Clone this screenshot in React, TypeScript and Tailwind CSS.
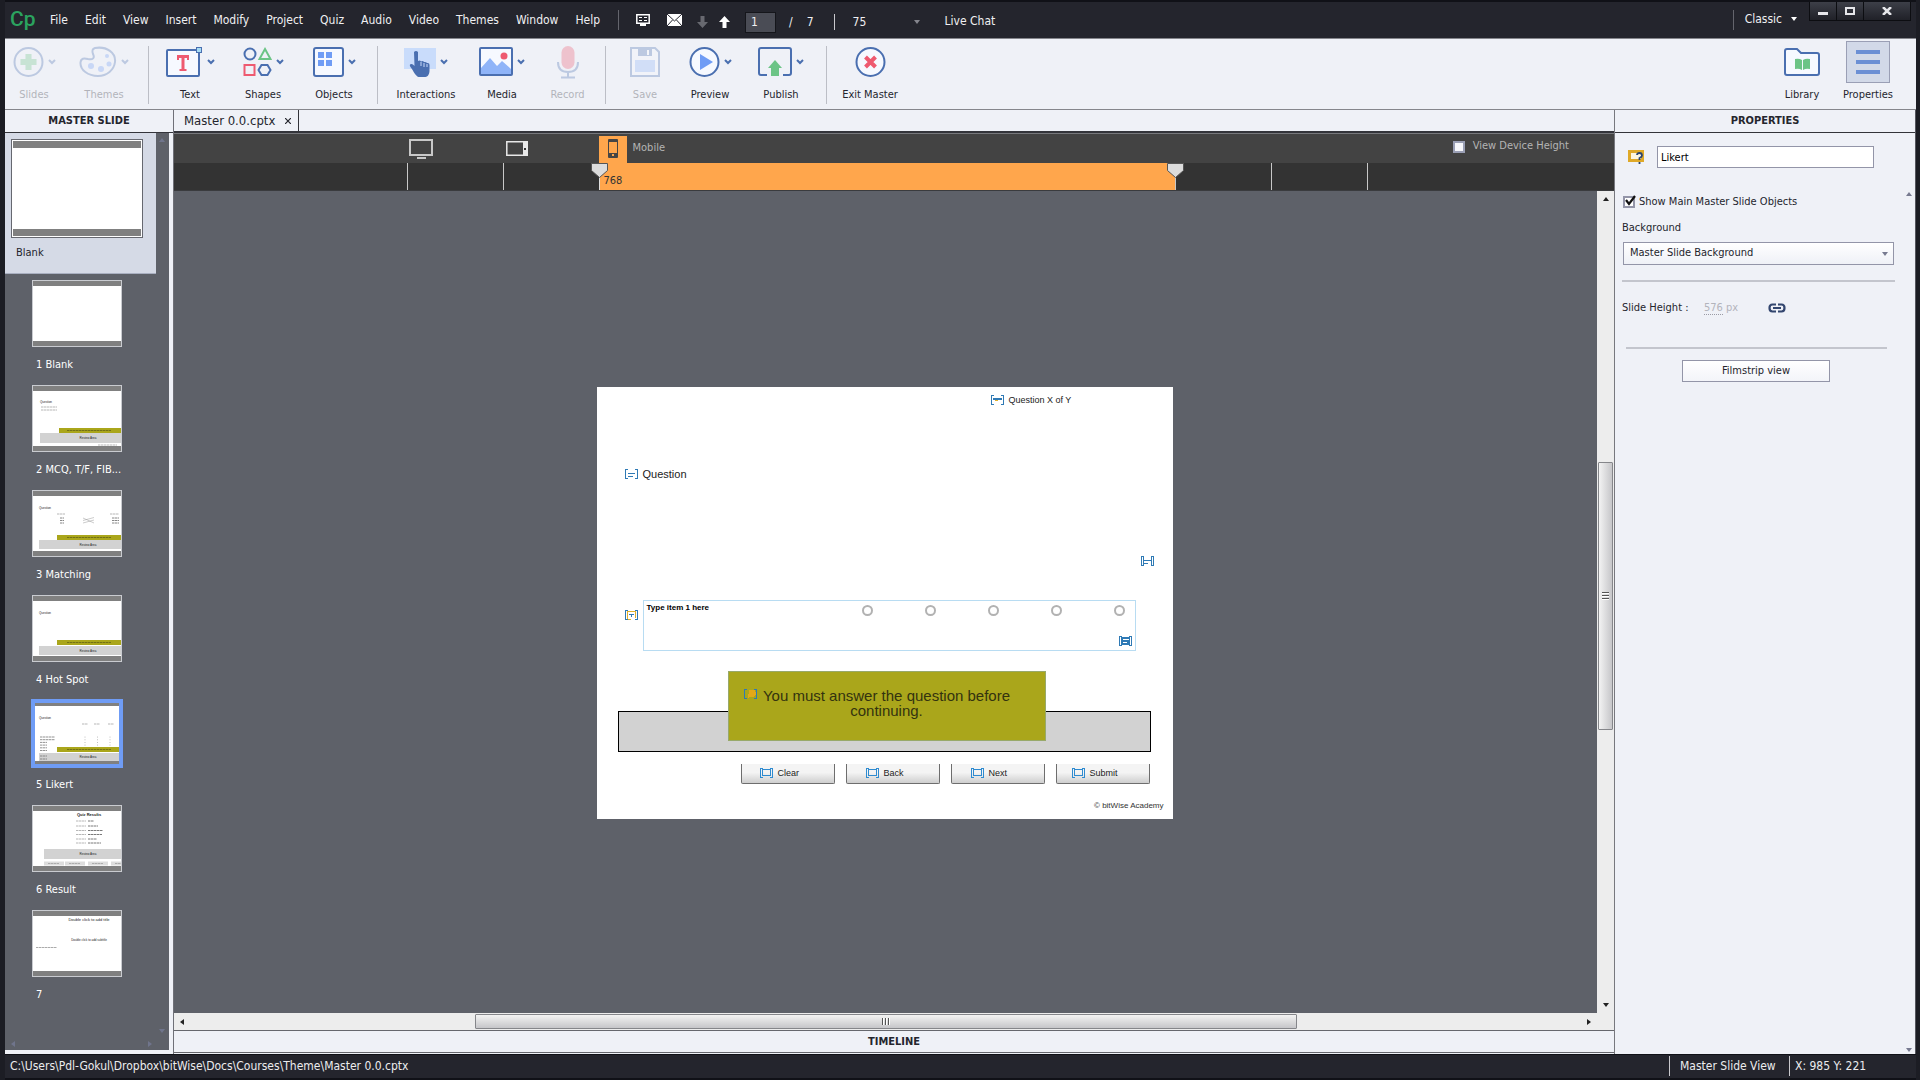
import type { ReactNode } from "react";

const MENUS = ["File", "Edit", "View", "Insert", "Modify", "Project", "Quiz", "Audio", "Video", "Themes", "Window", "Help"];

const INK = "#4a6fb0";

// ---------- small shared drawings ----------

function Chevron() {
  return (
    <svg width="8" height="6" viewBox="0 0 8 6" className="shrink-0">
      <path d="M1 1l3 3 3-3" fill="none" stroke={INK} strokeWidth="2" />
    </svg>
  );
}

function Caret({ dir, className }: { dir: "up" | "down" | "left" | "right"; className?: string }) {
  const d = { up: "M1 6l3-4 3 4z", down: "M1 2l3 4 3-4z", left: "M6 1L2 4l4 3z", right: "M2 1l4 3-4 3z" }[dir];
  return (
    <svg width="8" height="8" viewBox="0 0 8 8" className={`shrink-0 ${className ?? ""}`}>
      <path d={d} fill="currentColor" />
    </svg>
  );
}

function Marker({ kind }: { kind: "progress" | "text" | "list" | "item" | "caption" | "filled" | "button" }) {
  return (
    <svg width="13" height="10" viewBox="0 0 13 10" className="shrink-0" shapeRendering="crispEdges">
      <path d="M3 .5H.5v9H3M10 .5h2.5v9H10" fill="none" stroke={kind === "button" ? "#2f8bd0" : "#2f7ab5"} />
      {kind === "progress" && <><path d="M2 4h9" stroke="#2f7ab5" strokeWidth="2" /><path d="M4 5.5h3" stroke="#e0b02c" /></>}
      {kind === "text" && <path d="M3 4.5h7M3 7.5h5" stroke="#2f7ab5" />}
      {kind === "list" && <path d="M2.5 1v8M10.5 1v8M3 4.5h7M3 7.5h4" stroke="#2f7ab5" />}
      {kind === "item" && <><path d="M2.5 9V1.5h8V8M3 9.5h3" fill="none" stroke="#e0b02c" /><path d="M4 4.5h5M6.5 4v3" stroke="#2f7ab5" /></>}
      {kind === "caption" && <path d="M5 1h6l1 4-2 3H6L4 9z" fill="#e3a818" />}
      {kind === "filled" && <><path d="M2 1h9v8H2z" fill="#2f7ab5" /><path d="M4 3.5h6M4 6.5h4" stroke="#fff" /></>}
      {kind === "button" && <path d="M2.5 1.5h8v6h-8z" fill="none" stroke="#2f8bd0" />}
    </svg>
  );
}

// ---------- toolbar icons ----------

const icons: Record<string, ReactNode> = {
  Slides: (
    <svg width="31" height="32" viewBox="0 0 31 32">
      <circle cx="15.5" cy="16" r="14" fill="none" stroke={INK} strokeWidth="2" />
      <path d="M12.5 8h6v5h5v6h-5v5h-6v-5h-5v-6h5z" fill="#6cc486" />
    </svg>
  ),
  Themes: (
    <svg width="38" height="32" viewBox="0 0 38 32">
      <path d="M16 2c12-2 21 5 20 14-1 8-8 14-17 14C9 30 1 24 1.500 16.500 2 12 5 12 9 13c5 1 7-1 5-5-1-3-1-5 2-6z" fill="none" stroke={INK} strokeWidth="2" />
      <g fill="#6f9cf5"><circle cx="12" cy="20" r="3" /><circle cx="22" cy="23" r="3" /><circle cx="30" cy="18" r="2.5" /><circle cx="28" cy="10" r="2" /></g>
    </svg>
  ),
  Text: (
    <svg width="37" height="32" viewBox="0 0 37 32">
      <rect x="1" y="4" width="32" height="26" rx="1" fill="#f6f9ff" stroke={INK} strokeWidth="2" />
      <path d="M11 9h12v5h-2v-2h-2.500v11h2v2h-7v-2h2V12H13v2h-2z" fill="#ee5a70" />
      <rect x="30.5" y="1.5" width="5" height="5" fill="#a6dcf5" stroke={INK} />
    </svg>
  ),
  Shapes: (
    <svg width="29" height="32" viewBox="0 0 29 32" fill="none" strokeWidth="2">
      <circle cx="7" cy="8" r="5.5" stroke={INK} />
      <path d="M22 3l5.500 10h-11z" stroke="#6cc486" />
      <rect x="1.5" y="19" width="10" height="10" stroke="#ee5a70" />
      <path d="M18.500 19h6l3 5-3 5h-6l-3-5z" stroke={INK} />
    </svg>
  ),
  Objects: (
    <svg width="31" height="32" viewBox="0 0 31 32">
      <rect x="1" y="2" width="29" height="28" rx="2" fill="#f6f9ff" stroke={INK} strokeWidth="2" />
      <path d="M5 6h6v6H5zM13 6h6v6h-6zM5 14h6v6H5zM13 14h6v6h-6z" fill="#6f9cf5" />
    </svg>
  ),
  Interactions: (
    <svg width="32" height="32" viewBox="0 0 32 32">
      <rect x="0" y="2" width="32" height="21" fill="#c9dcfb" />
      <path d="M10 6q2-2 4 0v9q2-1 3 .5 2-1 3 .5 2-.5 3 1 2.500-.5 2.500 2v6c0 3-2 6-4 6h-7c-3-1-5-6-8-10-2-3 1-4 3-2l1 1z" fill={INK} />
      <path d="M17 16v4M20 17v4M23 18v3" stroke="#c9dcfb" />
    </svg>
  ),
  Media: (
    <svg width="34" height="32" viewBox="0 0 34 32">
      <rect x="1" y="2" width="32" height="27" rx="1" fill="#f6f9ff" stroke={INK} strokeWidth="2" />
      <path d="M2 28v-6l9-10 7 8 5-5 9 8v5z" fill="#8fb4f8" />
      <circle cx="25" cy="10" r="3.5" fill="#ee5a70" />
    </svg>
  ),
  Record: (
    <svg width="22" height="34" viewBox="0 0 22 34">
      <rect x="4.5" y="1" width="13" height="23" rx="6.5" fill="#ee5a70" />
      <path d="M1 17c0 7 4 10 10 10s10-3 10-10M11 27v5M4 32.500h14" fill="none" stroke={INK} strokeWidth="2" />
    </svg>
  ),
  Save: (
    <svg width="30" height="32" viewBox="0 0 30 32">
      <path d="M1 2h24l4 4v24H1z" fill="#f6f9ff" stroke={INK} strokeWidth="2" />
      <path d="M8 2h14v8H8z" fill={INK} /><path d="M18 4v5" stroke="#fff" strokeWidth="2" />
      <path d="M5 14h20v12H5z" fill="#8fb4f8" />
    </svg>
  ),
  Preview: (
    <svg width="31" height="32" viewBox="0 0 31 32">
      <circle cx="15.5" cy="16" r="14" fill="#f6f9ff" stroke={INK} strokeWidth="2" />
      <path d="M11 8l13 8-13 8z" fill="#6f9cf5" />
    </svg>
  ),
  Publish: (
    <svg width="34" height="32" viewBox="0 0 34 32">
      <path d="M9 29H3q-2 0-2-2V4q0-2 2-2h28q2 0 2 2v23q0 2-2 2h-6" fill="none" stroke={INK} strokeWidth="2" />
      <path d="M17 14l7 8h-3v8h-8v-8h-3z" fill="#6cc486" />
    </svg>
  ),
  "Exit Master": (
    <svg width="31" height="32" viewBox="0 0 31 32">
      <circle cx="15.5" cy="16" r="14" fill="#f6f9ff" stroke={INK} strokeWidth="2" />
      <path d="M10.500 11l10 10M20.500 11l-10 10" stroke="#ee5a70" strokeWidth="4" />
    </svg>
  ),
  Library: (
    <svg width="36" height="32" viewBox="0 0 36 32">
      <path d="M1 5q0-2 2-2h10l4 4h16q2 0 2 2v18q0 2-2 2H3q-2 0-2-2z" fill="#f6f9ff" stroke={INK} strokeWidth="2" />
      <path d="M11 13q4-1 7 1v10q-3-2-7-1zM19 14q3-2 7-1v10q-4-1-7 1z" fill="#6cc486" />
    </svg>
  ),
  Properties: (
    <svg width="24" height="26" viewBox="0 0 24 26">
      <path d="M0 3h24M0 13h24M0 23h24" stroke="#6b8fd4" strokeWidth="4" />
    </svg>
  ),
};

const TOOL_GROUPS = [
  { className: "pr-[3px]", tools: [{ name: "Slides", w: "w-[58px]", menu: true, off: true }, { name: "Themes", w: "w-[82px]", menu: true, off: true }] },
  { className: "pr-1", tools: [{ name: "Text", w: "w-[82px]", menu: true }, { name: "Shapes", w: "w-[64px]", menu: true }, { name: "Objects", w: "w-[78px]", menu: true }] },
  { className: "", tools: [{ name: "Interactions", w: "w-[96px]", menu: true }, { name: "Media", w: "w-[56px]", menu: true }, { name: "Record", w: "w-[75px]", off: true }] },
  { className: "", tools: [{ name: "Save", w: "w-[78px]", off: true }, { name: "Preview", w: "w-[52px]", menu: true }, { name: "Publish", w: "w-[90px]", menu: true }] },
];

function Tool({ name, w, menu, off, active }: { name: string; w: string; menu?: boolean; off?: boolean; active?: boolean }) {
  return (
    <button disabled={off} className={`flex flex-col items-center ${w} ${off ? "opacity-30" : ""}`}>
      <span className={`flex h-[42px] items-center justify-center gap-1 ${active ? "w-11 border border-[#9a9fb5] bg-[#d2d9e8]" : ""}`}>
        {icons[name]}
        {menu && <Chevron />}
      </span>
      <span className="mt-1 whitespace-nowrap text-[11px] leading-4">{name}</span>
    </button>
  );
}

function TitleBar() {
  return (
    <header className="flex h-[38px] shrink-0 border-t-2 border-[#101117] bg-[#24252d] text-[12px] text-[#f0f0f2]">
      <div className="w-[45px] pl-[5px] pt-[3px] font-[Roboto,sans-serif] text-[21px] font-medium leading-7 text-[#2ba35f]">Cp</div>
      <nav className="flex h-9 items-center gap-[17px]">
        {MENUS.map(m => <button key={m}>{m}</button>)}
      </nav>
      <div className="ml-[18px] mt-2 h-5 w-px bg-[#64656d]" />
      <div className="flex h-9 items-center pl-[17px] pt-1">
        <button aria-label="Screens" className="mb-1">
          <svg width="14" height="14" viewBox="0 0 14 14"><path d="M.8 1.800h12.400v8.400H.8z" fill="none" stroke="#fff" strokeWidth="1.5" /><path d="M3 4.500h3M8 4.500h3M3 7.500h3M8 7.500h3" stroke="#fff" /><path d="M4 11h6v2H4z" fill="#fff" /></svg>
        </button>
        <button aria-label="Mail" className="mb-1 ml-[17px]">
          <svg width="15" height="12" viewBox="0 0 15 12"><path d="M0 0h15v12H0z" fill="#fff" /><path d="M0 0l7.500 7L15 0M0 12l5.500-6M15 12L9.500 6" fill="none" stroke="#24252d" /></svg>
        </button>
        <button aria-label="Next slide" className="ml-[15px]">
          <svg width="11" height="12" viewBox="0 0 11 12"><path d="M3.500 0h4v6H11l-5.500 6L0 6h3.500z" fill="#686970" /></svg>
        </button>
        <button aria-label="Previous slide" className="ml-[11px]">
          <svg width="11" height="12" viewBox="0 0 11 12"><path d="M3.500 12h4V6H11L5.500 0 0 6h3.500z" fill="#fff" /></svg>
        </button>
        <input aria-label="Slide number" defaultValue="1" className="ml-[15px] h-[21px] w-[31px] border border-[#15161b] bg-[#4a4c55] px-[5px]" />
        <span className="ml-[13px]">/</span>
        <span className="ml-[14px]">7</span>
        <div className="ml-5 h-4 w-px bg-[#c8c8cc]" />
        <button className="ml-[18px] flex w-[68px] items-center justify-between">75 <Caret dir="down" className="text-[#85868e]" /></button>
      </div>
      <button className="ml-6 h-9 pt-[2px]">Live Chat</button>
      <div className="ml-auto mt-2 h-5 w-px bg-[#64656d]" />
      <button className="ml-[11px] flex h-[34px] items-center gap-[9px]">Classic <svg width="6" height="4"><path d="M0 0h6L3 4z" fill="#fff" /></svg></button>
      <div className="ml-3 mr-[5px] flex h-[19px] border border-t-0 border-[#0c0d11] bg-gradient-to-b from-[#3d3f48] to-[#202128]">
        <button aria-label="Minimize" className="flex w-[27px] items-center justify-center border-r border-[#0c0d11]"><span className="mt-1 h-[3px] w-[10px] bg-[#e6e6ea]" /></button>
        <button aria-label="Maximize" className="flex w-[27px] items-center justify-center border-r border-[#0c0d11]"><span className="h-2 w-[10px] border-2 border-[#e6e6ea]" /></button>
        <button aria-label="Close" className="flex w-[46px] items-center justify-center"><svg width="10" height="8" viewBox="0 0 10 8"><path d="M1 0l8 8M9 0L1 8" stroke="#e6e6ea" strokeWidth="2.5" /></svg></button>
      </div>
    </header>
  );
}

// ---------- filmstrip ----------

// a run of greeked text, too small to read in the thumbnail
function Greek({ x, y, w, color = "#999" }: { x: number; y: number; w: number; color?: string }) {
  return <path d={`M${x} ${y}h${w}`} stroke={color} strokeWidth="1" strokeDasharray="2.5 .5" opacity=".7" />;
}

function Tiny({ x, y, size = 4, mid, bold, children }: { x: number; y: number; size?: number; mid?: boolean; bold?: boolean; children: string }) {
  return <text x={x} y={y} fontSize={size} fontWeight={bold ? 700 : 400} textAnchor={mid ? "middle" : "start"} fill="#222" className="font-['Liberation_Sans',sans-serif]">{children}</text>;
}

function Feedback({ x, y, gx, gy, gh }: { x: number; y: number; gx: number; gy: number; gh: number }) {
  return (
    <>
      <rect x={gx} y={gy} width={88 - gx} height={gh} fill="#d2d2d2" />
      <Tiny x={55} y={gy + gh / 2 + 1} size={3} mid>Review Area</Tiny>
      <rect x={x} y={y} width={88 - x} height="5" fill="#aaa61b" />
      <Greek x={34} y={y + 2.5} w={44} color="#5d5b14" />
    </>
  );
}

const SLIDES: { label: string; art?: ReactNode }[] = [
  { label: "1 Blank" },
  {
    label: "2 MCQ, T/F, FIB...",
    art: (
      <>
        <Tiny x={7} y={17} size={3}>Question</Tiny>
        <Greek x={8} y={21} w={16} /><Greek x={8} y={24} w={16} />
        <Feedback x={26} y={42} gx={7} gy={47} gh={10} />
        <Greek x={65} y={59} w={19} />
      </>
    ),
  },
  {
    label: "3 Matching",
    art: (
      <>
        <Tiny x={6} y={18} size={3}>Question</Tiny>
        <Greek x={24} y={23} w={8} /><Greek x={77} y={23} w={9} />
        {[27, 29.5, 32].map(y => <g key={y}><Greek x={27} y={y} w={4} color="#555" /><Greek x={79} y={y} w={7} color="#555" /></g>)}
        <path d="M50 27l11 5M50 29.500l11-3M50 32l11-3" stroke="#999" strokeWidth=".5" />
        <Feedback x={24} y={44} gx={6} gy={49} gh={9} />
      </>
    ),
  },
  {
    label: "4 Hot Spot",
    art: (
      <>
        <Tiny x={6} y={18} size={3}>Question</Tiny>
        <Feedback x={24} y={44} gx={6} gy={50} gh={9} />
      </>
    ),
  },
  {
    label: "5 Likert",
    art: (
      <>
        <Tiny x={6} y={18} size={3}>Question</Tiny>
        {[49, 61, 75].map(x => <Greek key={x} x={x} y={23} w={6} />)}
        {[36, 38.7, 41.4, 44.1, 46.8, 49.5].map((y, i) => (
          <g key={y}>
            <Greek x={7} y={y} w={i < 2 ? 15 : 7} color="#666" />
            {[52, 64.5, 77].map(x => <circle key={x} cx={x} cy={y} r=".5" fill="#aaa" />)}
          </g>
        ))}
        <Feedback x={24} y={46} gx={6} gy={52} gh={8} />
        <Greek x={7} y={55} w={7} color="#666" /><Greek x={7} y={58} w={7} color="#666" />
      </>
    ),
  },
  {
    label: "6 Result",
    art: (
      <>
        <Tiny x={56} y={10} size={4} mid bold>Quiz Results</Tiny>
        {[15, 20, 24.5, 28.5, 33, 37].map((y, i) => <g key={y}><Greek x={43} y={y} w={10} /><Greek x={55} y={y} w={[6, 10, 15, 14, 9, 13][i]} color="#444" /></g>)}
        <rect x="11" y="43" width="77" height="10" fill="#d2d2d2" />
        <Tiny x={55} y={49} size={3} mid>Review Area</Tiny>
        {[11, 32, 55, 78].map(x => <g key={x}><rect x={x} y="55.5" width="20" height="4" fill="#ddd" /><Greek x={x + 4} y={57.5} w={11} /></g>)}
      </>
    ),
  },
  {
    label: "7",
    art: (
      <>
        <Tiny x={56} y={10} size={4} mid>Double click to add title</Tiny>
        <Tiny x={56} y={30} size={3} mid>Double click to add subtitle</Tiny>
        <Greek x={3} y={36.5} w={21} color="#888" />
      </>
    ),
  },
];

function Filmstrip() {
  return (
    <aside className="flex w-[169px] shrink-0 flex-col border-r border-[#6f7078] bg-[#eff1f7]">
      <h2 className="flex h-[23px] shrink-0 items-center justify-center border-b border-[#33343a] text-[11px] font-bold">MASTER SLIDE</h2>
      <div className="mb-1 mr-1 flex min-h-0 flex-1 bg-[#5e6169] text-[11px] text-white">
        <div className="flex min-w-0 flex-1 flex-col">
          <button className="flex h-[141px] w-[151px] shrink-0 flex-col items-start border-b border-[#a9afc0] bg-[#d5dae6] pl-[6px] pt-[6px] text-[#24252d]">
            <span className="h-[99px] w-[132px] border border-[#666870] bg-white p-px">
              <span className="block h-full border-y-[7px] border-[#808080]" />
            </span>
            <span className="ml-[5px] mt-[7px] leading-4">Blank</span>
          </button>
          <div className="flex flex-col pl-[27px] pt-[5px]">
            {SLIDES.map(({ label, art }) => (
              <button key={label} className="flex h-[105px] flex-col items-start pt-px">
                <span className={label === "5 Likert" ? "-m-px h-[69px] w-[92px] overflow-hidden border-4 border-[#6f9cf5]" : "h-[67px] w-[90px] border border-[#c9cbd0]"}>
                  <svg width="88" height="65" viewBox="0 0 88 65" className={label === "5 Likert" ? "-ml-[2px] -mt-[2px] max-w-none" : ""}>
                    <path d="M0 0h88v65H0z" fill="#808080" />
                    <path d="M0 5h88v55H0z" fill="#fff" />
                    {art}
                  </svg>
                </span>
                <span className="ml-1 mt-[10px] leading-4">{label}</span>
              </button>
            ))}
          </div>
          <div className="mb-[2px] mt-auto flex justify-between pl-1 pr-1 text-[#70758c]"><Caret dir="left" /><Caret dir="right" /></div>
        </div>
        <div className="flex flex-col justify-between pb-[15px] pr-[3px] pt-[3px] text-[#70758c]"><Caret dir="up" /><Caret dir="down" /></div>
      </div>
    </aside>
  );
}

// ---------- stage ----------

function Handle() {
  return (
    <svg width="17" height="15" viewBox="0 0 17 15" className="absolute -left-[9px] top-0">
      <path d="M.5.5h16v7l-8 7-8-7z" fill="#dcdcdc" stroke="#555" />
    </svg>
  );
}

function Ruler() {
  return (
    <div className="shrink-0 border-t border-[#77787c] bg-[#434343] text-[11px] text-[#b4b4b4]">
      <div className="grid h-[29px] grid-cols-[1fr_96px_96px_576px_96px_96px_1fr] pr-[15px]">
        <span />
        <button aria-label="Desktop" className="pl-[2px]">
          <svg width="24" height="20" viewBox="0 0 24 20"><path d="M1 1h22v15H1z" fill="none" stroke="#c8c8c8" strokeWidth="2" /><path d="M8 19h9" stroke="#c8c8c8" strokeWidth="2" /></svg>
        </button>
        <button aria-label="Tablet" className="pl-[3px]">
          <svg width="22" height="15" viewBox="0 0 22 15"><path d="M.8.8h20.400v13.400H.8z" fill="none" stroke="#e8e8e8" strokeWidth="1.5" /><path d="M17 0h5v15h-5z" fill="#e8e8e8" /><path d="M18 7h2v2h-2z" fill="#333" /></svg>
        </button>
        <button className="flex items-end gap-[6px]">
          <span className="flex h-[27px] w-7 items-start justify-center bg-[#ffa64c] pt-[3px]">
            <svg width="10" height="19" viewBox="0 0 10 19"><rect width="10" height="19" rx="1" fill="#454545" /><path d="M1 3h8v11H1z" fill="#ffa64c" /><path d="M4 15h2v2H4z" fill="#ffa64c" /></svg>
          </span>
          <span className="self-center">Mobile</span>
        </button>
        <label className="col-span-3 flex items-center justify-end gap-2 pb-1 pr-[30px]">
          <input type="checkbox" className="h-3 w-3 appearance-none border-2 border-[#9a9fb5] bg-[#f6f7fb]" />
          View Device Height
        </label>
      </div>
      <div className="grid h-7 grid-cols-[1fr_96px_96px_576px_96px_96px_1fr] border-b border-[#3a3b3e] bg-[#333] pr-[15px]">
        <span />
        <span className="border-l border-[#c8c8c8]" />
        <span className="border-l border-[#c8c8c8]" />
        <span className="relative border-l border-[#e0e0e0] bg-[#ffa64c] pl-1 pt-[10px] leading-4 text-[#333]"><Handle />768</span>
        <span className="relative border-l border-[#c8c8c8]"><Handle /></span>
        <span className="border-l border-[#c8c8c8]" />
        <span className="border-l border-[#c8c8c8]" />
      </div>
    </div>
  );
}

const BUTTONS = [
  { label: "Clear", pad: "pl-[18px]" },
  { label: "Back", pad: "pl-[19px]" },
  { label: "Next", pad: "pl-[19px]" },
  { label: "Submit", pad: "pl-[15px]" },
];

// Slide objects sit on a free canvas, so each has its own place.
function Slide() {
  return (
    <div className="relative h-[432px] w-[576px] shrink-0 overflow-hidden bg-white font-['Liberation_Sans',sans-serif] text-[#222]">
      <div className="absolute left-[394px] top-[7px] flex items-center gap-[5px] text-[9px] leading-3"><Marker kind="progress" />Question X of Y</div>
      <div className="absolute left-7 top-20 flex items-center gap-[5px] text-[11px] leading-[14px]"><Marker kind="text" />Question</div>
      <div className="absolute left-[544px] top-[169px]"><Marker kind="list" /></div>

      <div className="absolute left-7 top-[223px]"><Marker kind="item" /></div>
      <div role="radiogroup" aria-labelledby="item-1" className="absolute left-[46px] top-[213px] h-[51px] w-[493px] border border-[#b8dcf2]">
        <span id="item-1" className="absolute left-[3px] top-px text-[8px] font-bold leading-3 text-black">Type item 1 here</span>
        <div className="absolute left-[218px] top-1 flex gap-[52px]">
          {[1, 2, 3, 4, 5].map(n => <input key={n} type="radio" name="likert" aria-label={`Rating ${n}`} className="h-[11px] w-[11px] appearance-none rounded-full border-2 border-[#b2b2b2] bg-white" />)}
        </div>
        <div className="absolute bottom-1 right-[3px]"><Marker kind="filled" /></div>
      </div>

      <div className="absolute left-[21px] top-[324px] h-[41px] w-[533px] border border-black bg-[#d2d2d2]" />
      <div className="absolute left-[131px] top-[284px] h-[70px] w-[318px] border border-[#98a96a] bg-[#aaa61b] pt-4 text-center text-[15px] leading-[15px] text-[#33330f]">
        <span className="absolute left-[15px] top-[17px]"><Marker kind="caption" /></span>
        You must answer the question before<br />continuing.
      </div>

      <div className="absolute left-36 top-[377px] flex gap-[11px]">
        {BUTTONS.map(({ label, pad }) => (
          <button key={label} className={`flex h-5 w-[94px] items-center gap-[5px] rounded-b-[2px] border border-t-0 border-[#6e6e6e] bg-gradient-to-b from-[#f4f4f4] from-45% to-[#cfcfcf] pb-[2px] text-[9px] leading-3 ${pad}`}>
            <Marker kind="button" />{label}
          </button>
        ))}
      </div>
      <div className="absolute bottom-[7px] right-[9px] text-[8px] leading-3 text-[#333]">© bitWise Academy</div>
    </div>
  );
}

function Stage() {
  return (
    <main className="flex min-w-0 flex-1 flex-col bg-[#eff1f7]">
      <div className="flex h-[22px] shrink-0 border-b border-[#33343a]">
        <div className="flex w-[125px] items-center justify-between border-r border-[#33343a] pl-[10px] pr-1 text-[13px]">
          Master 0.0.cptx
          <button aria-label="Close tab" className="p-[3px]"><svg width="6" height="6" viewBox="0 0 6 6"><path d="M0 0l6 6M6 0L0 6" stroke="#24252d" strokeWidth="1.2" /></svg></button>
        </div>
      </div>
      <div className="h-px shrink-0 bg-[#33343a]" />
      <Ruler />
      <div className="flex min-h-0 flex-1">
        <div className="flex min-w-0 flex-1 items-center justify-center overflow-hidden bg-[#5e6169] pr-[2px] pt-[2px]"><Slide /></div>
        <div className="flex w-[17px] flex-col items-center bg-[#ededed] py-1 text-[#222]">
          <Caret dir="up" />
          <div className="flex flex-1 flex-col">
            <div className="grow-[260]" />
            <div className="flex w-[15px] grow-[266] basis-0 flex-col items-center justify-center gap-px rounded-[1px] border border-[#85868a] bg-gradient-to-r from-[#f3f3f3] to-[#c6c6c9]">
              <span className="h-[2px] w-[7px] border-b border-white bg-[#555]" />
              <span className="h-[2px] w-[7px] border-b border-white bg-[#555]" />
              <span className="h-[2px] w-[7px] border-b border-white bg-[#555]" />
            </div>
            <div className="grow-[272]" />
          </div>
          <Caret dir="down" />
        </div>
      </div>
      <div className="flex h-[17px] shrink-0 items-center bg-[#ededed] pl-1 pr-[21px] text-[#222]">
        <Caret dir="left" />
        <div className="flex h-[15px] flex-1">
          <div className="grow-[289]" />
          <div className="flex grow-[822] basis-0 items-center justify-center gap-px rounded-[1px] border border-[#85868a] bg-gradient-to-b from-[#f3f3f3] to-[#c6c6c9]">
            <span className="h-[7px] w-[2px] border-r border-white bg-[#555]" />
            <span className="h-[7px] w-[2px] border-r border-white bg-[#555]" />
            <span className="h-[7px] w-[2px] border-r border-white bg-[#555]" />
          </div>
          <div className="grow-[288]" />
        </div>
        <Caret dir="right" />
      </div>
      <h2 className="mb-px flex h-[23px] shrink-0 items-center justify-center border-y border-[#66676d] pt-px text-[11px] font-bold">TIMELINE</h2>
    </main>
  );
}

// ---------- properties ----------

function Properties() {
  return (
    <aside className="flex w-[301px] shrink-0 flex-col border-l border-[#77787e] bg-[#eff1f7] text-[11px]">
      <h2 className="flex h-[23px] shrink-0 items-center justify-center border-b border-[#33343a] text-[11px] font-bold">PROPERTIES</h2>
      <div className="flex items-center pl-[13px] pt-[13px]">
        <svg width="16" height="14" viewBox="0 0 16 14"><path d="M1.500 1.500h13v9h-13z" fill="#fdf6df" stroke="#dfa928" strokeWidth="3" /><path d="M9 5q0-2 2.500-2T14 5.500Q14 7 11.500 8v2M11.500 12v2" fill="none" stroke="#2c4570" strokeWidth="1.8" /></svg>
        <input aria-label="Name" defaultValue="Likert" className="ml-[13px] h-[22px] w-[217px] border border-[#9395a8] bg-white px-[3px] text-black" />
      </div>
      <div className="mt-[22px] flex min-h-0 flex-1">
        <div className="flex flex-1 flex-col pl-[7px] pt-1">
          <label className="relative flex h-4 items-center gap-1 pl-px">
            <input type="checkbox" defaultChecked className="h-3 w-3 appearance-none border-2 border-[#9395a8] bg-white" />
            <svg width="13" height="12" viewBox="0 0 13 12" className="pointer-events-none absolute left-[2px] top-px"><path d="M2 5l3 4 6-8" fill="none" stroke="#111" strokeWidth="2.2" /></svg>
            Show Main Master Slide Objects
          </label>
          <label htmlFor="bg" className="mt-[10px] leading-4">Background</label>
          <div className="relative ml-px mt-[6px] w-[271px]">
            <select id="bg" className="h-[23px] w-full appearance-none border border-[#9395a8] bg-gradient-to-b from-white to-[#eff1f7] px-[6px]"><option>Master Slide Background</option></select>
            <Caret dir="down" className="pointer-events-none absolute right-[5px] top-2 text-[#777a90]" />
          </div>
          <hr className="mt-[15px] w-[273px] border-t-2 border-[#c3c5cd]" />
          <div className="mt-[18px] flex h-4 items-center">
            <span className="w-[82px]">Slide Height :</span>
            <span className="w-16 text-[#b3b4bc]"><span className="border-b border-dotted border-[#9a9ba5]">576</span> px</span>
            <button aria-label="Link height">
              <svg width="18" height="10" viewBox="0 0 18 10"><path d="M8 1.500H4.500Q1.500 1.500 1.500 5t3 3.500H8M10 1.500h3.500Q16.500 1.500 16.500 5t-3 3.500H10M5 5h8" fill="none" stroke="#33466f" strokeWidth="2.2" /></svg>
            </button>
          </div>
          <hr className="ml-1 mt-[31px] w-[261px] border-t-2 border-[#c3c5cd]" />
          <button className="ml-[60px] mt-[11px] h-[22px] w-[148px] border border-[#9395a8] bg-gradient-to-b from-white to-[#f3f4f9]">Filmstrip view</button>
        </div>
        <div className="flex flex-col justify-between pr-[2px] text-[#777a90]"><Caret dir="up" /><Caret dir="down" /></div>
      </div>
    </aside>
  );
}

export default function App() {
  return (
    <div className="flex h-screen flex-col overflow-hidden bg-[#1c1d24] pl-[5px] pr-1 font-['DejaVu_Sans_Condensed','DejaVu_Sans',sans-serif] text-[#24252d]">
      <TitleBar />
      <div className="flex h-[72px] shrink-0 border-b border-t border-[#85868c] bg-[#eff1f7] pt-[2px]">
        {TOOL_GROUPS.map(({ className, tools }, i) => (
          <div key={i} className="flex">
            <div className={`flex ${className}`}>{tools.map(t => <Tool key={t.name} {...t} />)}</div>
            <div className="mt-[5px] h-[58px] w-px bg-[#bcbec6]" />
          </div>
        ))}
        <Tool name="Exit Master" w="w-[86px]" />
        <div className="ml-auto flex pr-3">
          <Tool name="Library" w="w-[60px]" />
          <Tool name="Properties" w="w-[72px]" active />
        </div>
      </div>
      <div className="flex min-h-0 flex-1 border-r border-[#55565e]">
        <Filmstrip />
        <Stage />
        <Properties />
      </div>
      <footer className="flex h-[26px] shrink-0 items-center border-b-2 border-t border-[#101117] bg-[#24252d] pb-[2px] pl-[5px] text-[12px] text-[#ececee]">
        <span>C:\Users\Pdl-Gokul\Dropbox\bitWise\Docs\Courses\Theme\Master 0.0.cptx</span>
        <span className="ml-auto flex h-5 w-[120px] items-center border-l border-[#c8c8cc] pl-[10px]">Master Slide View</span>
        <span className="flex h-5 w-[127px] items-center border-l border-[#c8c8cc] pl-[5px]">X: 985 Y: 221</span>
      </footer>
    </div>
  );
}
